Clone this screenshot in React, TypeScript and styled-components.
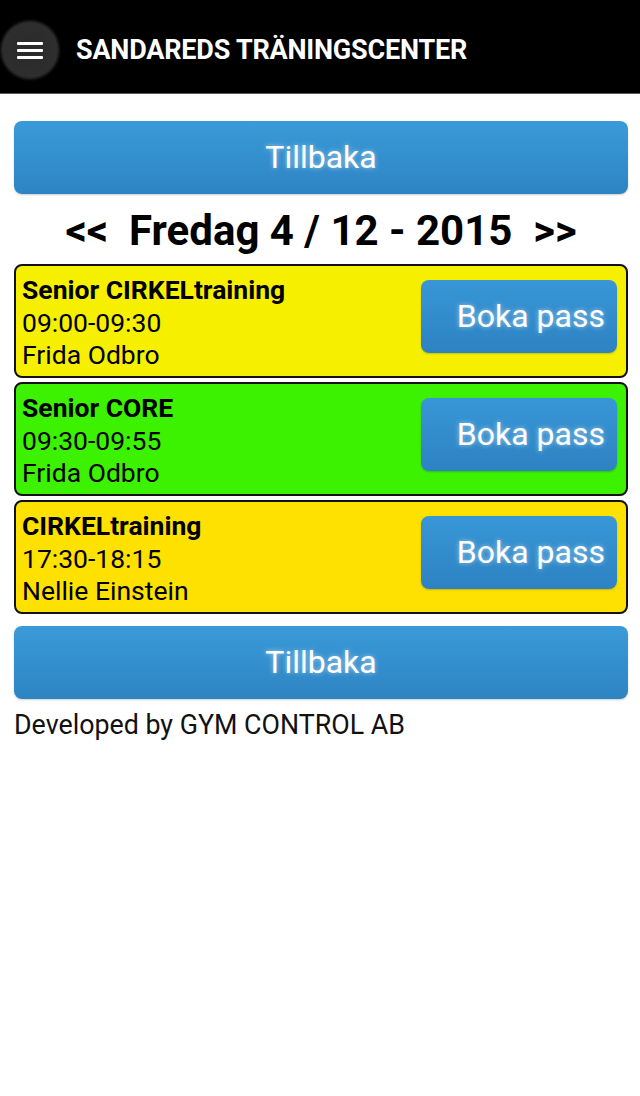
import React from "react";
import styled, { createGlobalStyle } from "styled-components";

type Session = {
  title: string;
  time: string;
  coach: string;
  color: string;
};

const sessions: Session[] = [
  { title: "Senior CIRKELtraining", time: "09:00-09:30", coach: "Frida Odbro", color: "#f6f000" },
  { title: "Senior CORE", time: "09:30-09:55", coach: "Frida Odbro", color: "#3cf200" },
  { title: "CIRKELtraining", time: "17:30-18:15", coach: "Nellie Einstein", color: "#ffe100" },
];

const GlobalStyle = createGlobalStyle`
  body {
    margin: 0;
    background: #fff;
    font-family: Roboto, "Liberation Sans", sans-serif;
    color: #000;
  }
`;

export default function App() {
  return (
    <>
      <GlobalStyle />
      <Header>
        <MenuBtn aria-label="Meny">
          <Bar />
          <Bar />
          <Bar />
        </MenuBtn>
        <HeaderTitle>SANDAREDS TRÄNINGSCENTER</HeaderTitle>
      </Header>
      <Main>
        <BlueButton>Tillbaka</BlueButton>
        <DateRow>{"<<  Fredag 4 / 12 - 2015  >>"}</DateRow>
        <CardList>
          {sessions.map((s) => (
            <Card key={s.time} $bg={s.color}>
              <CardText>
                <CardTitle>{s.title}</CardTitle>
                <CardLine>{s.time}</CardLine>
                <CardLine>{s.coach}</CardLine>
              </CardText>
              <BookBtn>Boka pass</BookBtn>
            </Card>
          ))}
        </CardList>
        <BlueButton>Tillbaka</BlueButton>
        <Footer>Developed by GYM CONTROL AB</Footer>
      </Main>
    </>
  );
}

const Header = styled.header`
  height: 94px;
  box-sizing: border-box;
  padding-top: 7px;
  background: #000;
  border-bottom: 1px solid #5a5a5a;
  display: flex;
  align-items: center;
`;

const MenuBtn = styled.button`
  width: 56px;
  height: 56px;
  margin-left: 2px;
  border: none;
  border-radius: 50%;
  background: radial-gradient(circle, #2a2a2a 0%, #2e2e2e 70%, #3a3a3a 100%);
  box-shadow: 0 0 3px 1px rgba(90, 90, 90, 0.6);
  display: flex;
  flex-direction: column;
  justify-content: center;
  align-items: center;
  gap: 4px;
  padding: 0;
`;

const Bar = styled.span`
  width: 26px;
  height: 3px;
  border-radius: 1px;
  background: #fff;
`;

const HeaderTitle = styled.h1`
  margin: 0 0 0 18px;
  color: #fff;
  font-size: 27px;
  font-weight: 700;
  letter-spacing: -0.2px;
`;

const Main = styled.main`
  padding: 27px 12px 0 14px;
  display: flex;
  flex-direction: column;
`;

const BlueButton = styled.button`
  height: 73px;
  width: 100%;
  border: none;
  border-radius: 8px;
  background: linear-gradient(#3a9ad9, #2e84c3);
  color: #fff;
  font-family: Roboto, "Liberation Sans", sans-serif;
  font-size: 32px;
  text-shadow: 0 0 5px rgba(255, 255, 255, 0.55);
  box-shadow: 0 1px 2px rgba(0, 0, 0, 0.2);
  padding: 0 0 2px;
`;

const DateRow = styled.div`
  height: 70px;
  display: flex;
  align-items: center;
  justify-content: center;
  white-space: pre;
  font-size: 42px;
  font-weight: 700;
  padding-top: 3px;
  box-sizing: border-box;
`;

const CardList = styled.div`
  display: flex;
  flex-direction: column;
  gap: 4px;
  margin-bottom: 12px;
`;

const Card = styled.div<{ $bg: string }>`
  height: 114px;
  box-sizing: border-box;
  border: 2px solid #111;
  border-radius: 8px;
  background: ${(p) => p.$bg};
  display: flex;
  justify-content: space-between;
  padding: 8px 9px 0 6px;
`;

const CardText = styled.div`
  display: flex;
  flex-direction: column;
  font-size: 26.5px;
  line-height: 32.5px;
`;

const CardTitle = styled.div`
  font-weight: 700;
`;

const CardLine = styled.div``;

const BookBtn = styled.button`
  width: 196px;
  height: 73px;
  margin-top: 6px;
  border: none;
  border-radius: 8px;
  background: linear-gradient(#3897d7, #2d82c2);
  color: #fff;
  font-family: Roboto, "Liberation Sans", sans-serif;
  font-size: 32px;
  text-align: right;
  padding: 0 12px 2px 0;
  text-shadow: 0 0 5px rgba(255, 255, 255, 0.55);
  box-shadow: 0 1px 2px rgba(0, 0, 0, 0.2);
`;

const Footer = styled.div`
  margin-top: 10px;
  font-size: 26.8px;
  color: #111;
`;
